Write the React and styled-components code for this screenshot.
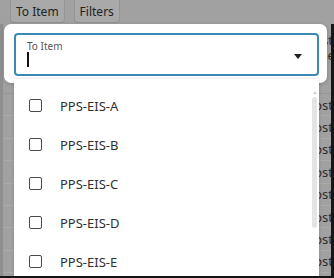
import React from "react";
import styled, { createGlobalStyle } from "styled-components";

const GlobalStyle = createGlobalStyle`
	html, body {
		margin: 0;
		padding: 0;
	}
	body {
		font-family: "Noto Sans", "Open Sans", sans-serif;
	}
`;

const Screen = styled.div`
	position: relative;
	width: 334px;
	height: 278px;
	box-sizing: border-box;
	overflow: hidden;
	background: #a1a1a1;
	border-bottom: 2px solid #141414;
	display: flex;
	flex-direction: column;
`;

const Toolbar = styled.div`
	height: 24px;
	flex-shrink: 0;
	display: flex;
	gap: 9px;
	padding-left: 10px;
`;

const ToolButton = styled.div`
	height: 23px;
	box-sizing: border-box;
	padding: 0 5px;
	display: flex;
	align-items: center;
	background: #a9a9a9;
	border: 1px solid #949494;
	border-top: none;
	border-radius: 0 0 4px 4px;
	font-size: 12px;
	color: #222;
`;

const Board = styled.div`
	flex: 1;
	border-left: 3px solid #8f8f8f;
	border-right: 3px solid #161616;
	overflow: hidden;
	display: flex;
	flex-direction: column;
`;

const HeaderCell = styled.div`
	height: 70px;
	flex-shrink: 0;
	box-sizing: border-box;
	padding: 9px 0 0 303px;
	font-size: 13px;
	line-height: 15px;
	color: #2e2e2e;
	white-space: pre;
	border-bottom: 1px solid #979797;
`;

const Row = styled.div`
	height: 22.4px;
	flex-shrink: 0;
	box-sizing: border-box;
	padding-left: 303px;
	display: flex;
	align-items: center;
	font-size: 13px;
	color: #2e2e2e;
	white-space: nowrap;
	border-bottom: 1px solid #aaaaaa;
`;

const Dialog = styled.div`
	position: absolute;
	left: 4px;
	top: 24px;
	width: 323px;
	height: 59px;
	box-sizing: border-box;
	padding: 9px 8px 0 10px;
	background: #fff;
	border-radius: 7px;
	box-shadow: 0 1px 4px rgba(0, 0, 0, 0.2);
`;

const Field = styled.div`
	height: 43px;
	box-sizing: border-box;
	border: 2px solid #3a8ab5;
	border-radius: 4px;
	padding: 5px 15px 0 11px;
	display: flex;
	align-items: flex-start;
`;

const FieldBody = styled.div`
	flex: 1;
	display: flex;
	flex-direction: column;
`;

const Label = styled.div`
	font-size: 10px;
	line-height: 12px;
	color: #555;
`;

const Caret = styled.div`
	width: 1.5px;
	height: 15px;
	background: #111;
`;

const Arrow = styled.svg`
	margin-top: 14px;
	width: 8px;
	height: 5px;
`;

const ListPanel = styled.div`
	position: absolute;
	left: 14px;
	top: 79px;
	width: 305px;
	bottom: 0;
	box-sizing: border-box;
	padding-top: 7px;
	background: #fff;
	box-shadow: 0 0 3px rgba(0, 0, 0, 0.18);
	overflow: hidden;
`;

const Option = styled.div`
	height: 39px;
	display: flex;
	align-items: center;
	gap: 18px;
	padding-left: 15px;
	font-size: 13px;
	color: #2f2f2f;
`;

const Check = styled.span`
	width: 13px;
	height: 13px;
	box-sizing: border-box;
	border: 1.5px solid #4a4a4a;
	border-radius: 2px;
`;

const ScrollUp = styled.span`
	position: absolute;
	left: 299px;
	top: 12px;
	width: 0;
	height: 0;
	border-left: 2.5px solid transparent;
	border-right: 2.5px solid transparent;
	border-bottom: 3px solid #cfcfcf;
`;

const ScrollThumb = styled.span`
	position: absolute;
	left: 298px;
	top: 18px;
	width: 5px;
	height: 131px;
	border-radius: 3px;
	background: #e4e4e4;
`;

const rows = Array.from({ length: 8 }, (_, i) => i);
const options = ["PPS-EIS-A", "PPS-EIS-B", "PPS-EIS-C", "PPS-EIS-D", "PPS-EIS-E"];

const App = () => (
	<>
		<GlobalStyle />
		<Screen>
			<Toolbar>
				<ToolButton>To Item</ToolButton>
				<ToolButton>Filters</ToolButton>
			</Toolbar>
			<Board>
				<HeaderCell>{"Cost\nType"}</HeaderCell>
				{rows.map((i) => (
					<Row key={i}>Cost</Row>
				))}
			</Board>

			<Dialog>
				<Field>
					<FieldBody>
						<Label>To Item</Label>
						<Caret />
					</FieldBody>
					<Arrow viewBox="0 0 8 5">
						<path d="M0 0 L8 0 L4 5 Z" fill="#222" />
					</Arrow>
				</Field>
			</Dialog>

			<ListPanel>
				<ScrollUp />
				<ScrollThumb />
				{options.map((name) => (
					<Option key={name}>
						<Check />
						{name}
					</Option>
				))}
			</ListPanel>
		</Screen>
	</>
);

export default App;
